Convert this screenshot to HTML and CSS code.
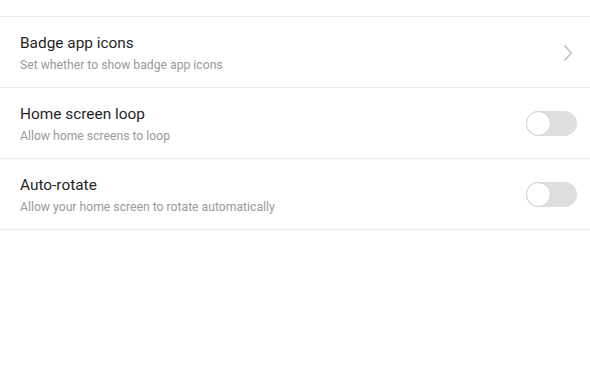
FILE: index.html
```html
<!DOCTYPE html>
<html>
<head>
<meta charset="utf-8">
<link rel="stylesheet" href="styles.css">
</head>
<body>
<div class="top"></div>
<div class="list">
  <div class="row">
    <div class="text">
      <div class="title">Badge app icons</div>
      <div class="sub">Set whether to show badge app icons</div>
    </div>
    <svg class="chev" width="10" height="18" viewBox="0 0 10 18"><path d="M1.5 1.5 L8.5 9 L1.5 16.5" fill="none" stroke="#b8b8b8" stroke-width="1.2"/></svg>
  </div>
  <div class="row">
    <div class="text">
      <div class="title">Home screen loop</div>
      <div class="sub">Allow home screens to loop</div>
    </div>
    <div class="toggle"><div class="knob"></div></div>
  </div>
  <div class="row">
    <div class="text">
      <div class="title">Auto-rotate</div>
      <div class="sub">Allow your home screen to rotate automatically</div>
    </div>
    <div class="toggle"><div class="knob"></div></div>
  </div>
</div>
</body>
</html>
```
FILE: styles.css
```css
html, body {
  margin: 0;
  padding: 0;
  background: #fff;
  font-family: Roboto, "Liberation Sans", sans-serif;
}
.top {
  height: 16px;
  border-bottom: 1px solid #ececec;
}
.row {
  height: 70px;
  box-sizing: border-box;
  height: 71px;
  border-bottom: 1px solid #ececec;
  display: flex;
  align-items: center;
  justify-content: space-between;
  padding: 2px 13px 0 20px;
}
.text {
  display: flex;
  flex-direction: column;
  gap: 5px;
}
.title {
  font-size: 15.4px;
  color: #1f1f1f;
  line-height: 20px;
}
.sub {
  font-size: 12.2px;
  color: #9a9a9a;
  line-height: 15px;
}
.chev {
  margin-right: 4px;
}
.toggle {
  width: 51px;
  height: 25px;
  border-radius: 13px;
  background: #dedede;
  position: relative;
  margin-top: -2px;
}
.knob {
  position: absolute;
  left: 0;
  top: 0;
  width: 23px;
  height: 23px;
  border-radius: 50%;
  background: #fff;
  border: 1px solid #d2d2d2;
}
```
